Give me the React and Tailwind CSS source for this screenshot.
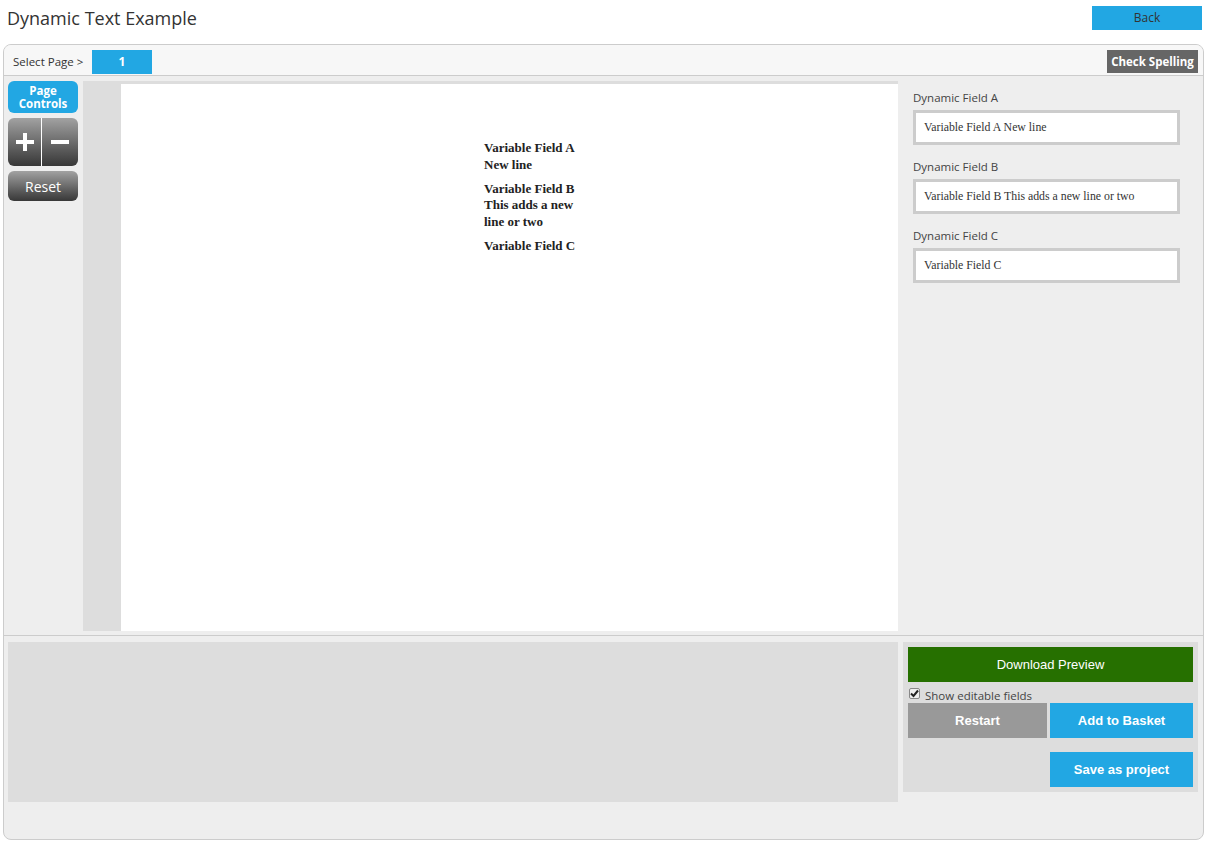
import React from 'react';

const ui = { fontFamily: '"Open Sans", "DejaVu Sans", sans-serif' };
const arial = { fontFamily: '"Liberation Sans", Arial, sans-serif' };
const serif = { fontFamily: '"Liberation Serif", "Times New Roman", serif' };

function Field({ label, value }) {
    return (
        <div className="mb-[15px]">
            <div className="text-[11.5px] text-[#444] leading-[14px] mb-[5px]" style={ui}>{label}</div>
            <div className="w-[267px] h-[35px] border-[3px] border-[#ccc] bg-white flex items-center pl-[8px] text-[11.8px] text-[#333]" style={serif}>
                {value}
            </div>
        </div>
    );
}

export default function App() {
    return (
        <div className="w-[1211px] h-[845px] bg-white overflow-hidden">
            <div className="h-[44px] flex justify-between items-start">
                <h1 className="ml-[7px] mt-[5px] text-[18px] text-[#333] leading-[26px]" style={ui}>Dynamic Text Example</h1>
                <button className="mt-[6px] mr-[9px] w-[110px] h-[24px] bg-[#22a7e3] text-[12px] text-[#333]" style={ui}>Back</button>
            </div>

            <div className="ml-[3px] mr-[7px] h-[796px] border border-[#ccc] rounded-[8px] bg-[#eee] overflow-hidden flex flex-col">
                {/* top bar */}
                <div className="h-[31px] bg-[#f7f7f7] border-b border-[#ccc] flex items-start pt-[5px] pl-[9px] pr-[5px]">
                    <span className="w-[79px] text-[11.5px] text-[#333] leading-[24px]" style={ui}>Select Page &gt;</span>
                    <button className="w-[60px] h-[24px] bg-[#22a7e3] text-white text-[12px] font-bold" style={ui}>1</button>
                    <button className="ml-auto w-[91px] h-[23px] bg-[#666] text-white text-[11.5px] font-bold" style={ui}>Check Spelling</button>
                </div>

                {/* body */}
                <div className="h-[560px] border-b border-[#ccc] flex pt-[5px] pb-[4px] pl-[4px]">
                    <div className="w-[70px] flex flex-col gap-[5px]">
                        <button className="h-[32px] rounded-[6px] bg-[#22a7e3] text-white text-[11.5px] font-bold leading-[13px]" style={ui}>Page<br />Controls</button>
                        <div className="h-[48px] rounded-[6px] bg-gradient-to-b from-[#a2a2a2] via-[#6c6c6c] to-[#383838] flex">
                            <div className="w-[34px] flex items-center justify-center border-r border-white">
                                <svg width="18" height="18" viewBox="0 0 18 18"><rect x="7" y="0" width="4" height="18" fill="#fff" /><rect x="0" y="7" width="18" height="4" fill="#fff" /></svg>
                            </div>
                            <div className="flex-1 flex items-center justify-center">
                                <svg width="18" height="18" viewBox="0 0 18 18"><rect x="0" y="7" width="18" height="4" fill="#fff" /></svg>
                            </div>
                        </div>
                        <button className="h-[30px] rounded-[6px] bg-gradient-to-b from-[#a2a2a2] via-[#6c6c6c] to-[#383838] text-white text-[14px]" style={ui}>Reset</button>
                    </div>

                    <div className="ml-[5px] w-[815px] h-[550px] bg-[#ddd] pt-[3px] pl-[38px] flex">
                        <div className="flex-1 bg-white pt-[56px] pl-[363px]">
                            <div className="w-[100px] text-[13px] font-bold text-[#222] leading-[16.5px]" style={serif}>
                                <p className="mb-[7.5px]">Variable Field A<br />New line</p>
                                <p className="mb-[7.5px]">Variable Field B<br />This adds a new<br />line or two</p>
                                <p>Variable Field C</p>
                            </div>
                        </div>
                    </div>

                    <div className="ml-[15px] pt-[10px]">
                        <Field label="Dynamic Field A" value="Variable Field A New line" />
                        <Field label="Dynamic Field B" value="Variable Field B This adds a new line or two" />
                        <Field label="Dynamic Field C" value="Variable Field C" />
                    </div>
                </div>

                {/* bottom */}
                <div className="flex pt-[6px] pl-[4px]">
                    <div className="w-[890px] h-[160px] bg-[#ddd]"></div>
                    <div className="ml-[5px] w-[295px] h-[150px] bg-[#ddd] p-[5px]">
                        <button className="w-[285px] h-[35px] bg-[#267000] text-white text-[13px]" style={arial}>Download Preview</button>
                        <div className="h-[21px] flex items-start gap-[5px] pl-[1px] pt-[6px]">
                            <span className="w-[11px] h-[11px] border border-[#888] rounded-[2px] bg-[#eee] flex items-center justify-center">
                                <svg width="9" height="9" viewBox="0 0 9 9"><path d="M1 4.5 L3.5 7 L8 1.5" stroke="#222" strokeWidth="2" fill="none" /></svg>
                            </span>
                            <span className="text-[11.5px] text-[#444] leading-[14px] mt-[1px]" style={ui}>Show editable fields</span>
                        </div>
                        <div className="flex gap-[3px]">
                            <button className="w-[139px] h-[35px] bg-[#999] text-white text-[13px] font-bold" style={arial}>Restart</button>
                            <button className="w-[143px] h-[35px] bg-[#22a7e3] text-white text-[13px] font-bold" style={arial}>Add to Basket</button>
                        </div>
                        <div className="flex justify-end mt-[14px]">
                            <button className="w-[143px] h-[35px] bg-[#22a7e3] text-white text-[13px] font-bold" style={arial}>Save as project</button>
                        </div>
                    </div>
                </div>
            </div>
        </div>
    );
}
